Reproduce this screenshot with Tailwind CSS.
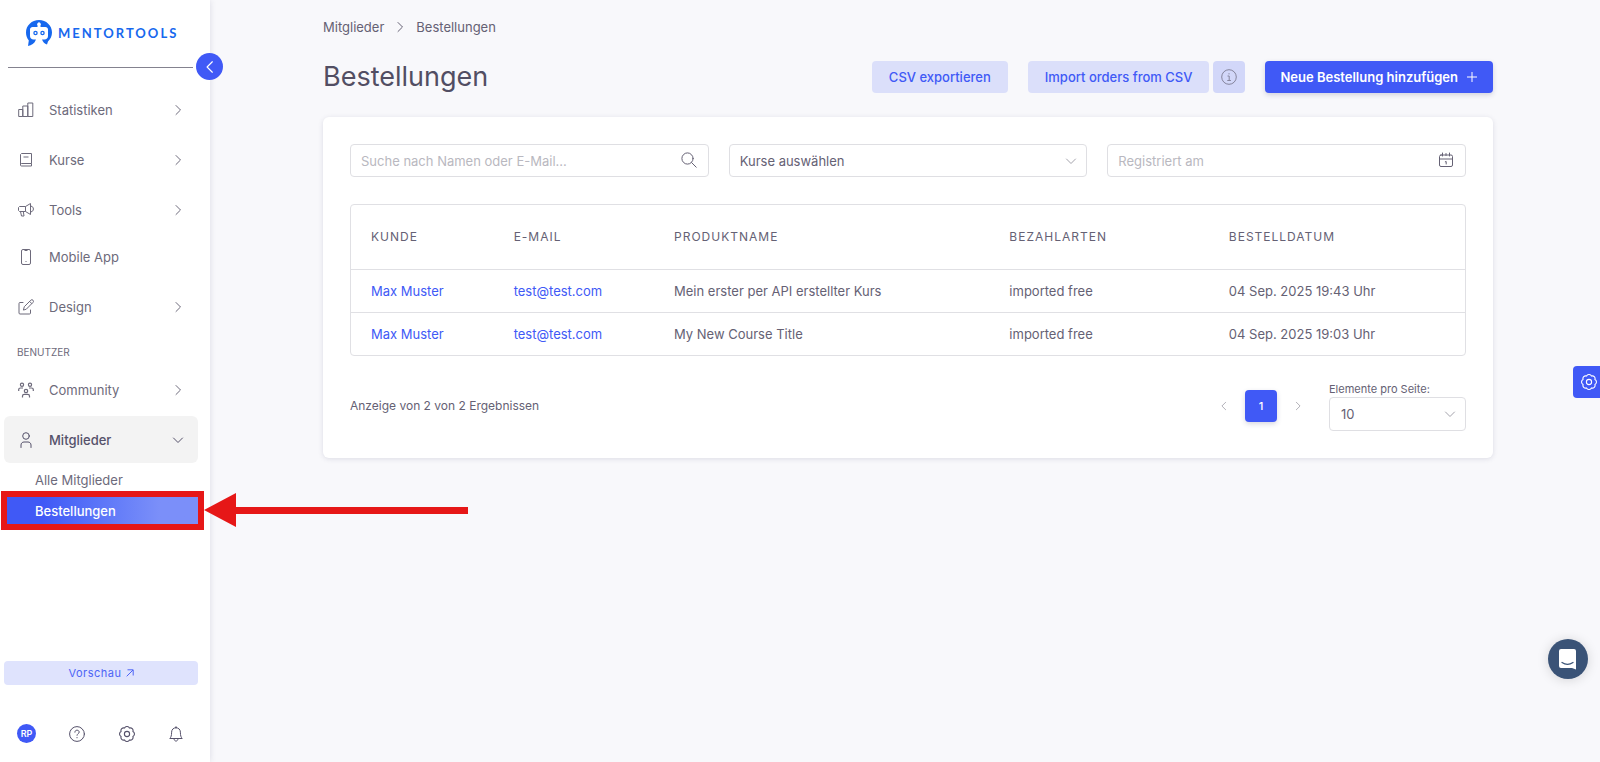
<!DOCTYPE html>
<html lang="de">
<head>
  <meta charset="UTF-8">
  <meta name="viewport" content="width=device-width, initial-scale=1.0">
  <title>Bestellungen</title>
  <script src="https://cdn.jsdelivr.net/npm/@tailwindcss/browser@4"></script>
</head>
<body class="flex min-h-screen bg-[#f8f8fb] font-[Inter,sans-serif] text-[13px] leading-5 text-[#656174]">

  <!-- Icons used more than once -->
  <svg class="hidden">
    <symbol id="chevron" viewBox="0 0 12 12"><path d="M4 1.500 8.500 6 4 10.500" fill="none" stroke="currentColor" stroke-linecap="round" stroke-linejoin="round"/></symbol>
    <symbol id="gear" viewBox="0 0 16 16" fill="none" stroke="currentColor" stroke-width="1.100" stroke-linejoin="round">
      <path d="M13.900 5.550a2.700 2.700 0 0 1 0 4.900 2.700 2.700 0 0 1-3.450 3.450 2.700 2.700 0 0 1-4.900 0 2.700 2.700 0 0 1-3.450-3.450 2.700 2.700 0 0 1 0-4.900 2.700 2.700 0 0 1 3.450-3.450 2.700 2.700 0 0 1 4.900 0 2.700 2.700 0 0 1 3.450 3.450Z"/>
      <circle cx="8" cy="8" r="2.600"/>
    </symbol>
  </svg>

  <!-- Sidebar -->
  <aside class="relative flex w-[210px] shrink-0 flex-col bg-white shadow-[0_0_6px_rgba(60,60,100,0.15)]">
    <a href="#" class="mr-[17px] ml-2 flex h-[68px] items-center gap-[6px] border-b border-[#84828f] pb-[2px] pl-[18px] text-[#1768ee]">
      <svg class="size-[26px] shrink-0" viewBox="0 0 26 26">
        <path fill="currentColor" d="M13 0C5.800 0 0 5.500 0 12.500c0 3 1 5.700 2.800 8L2 26c3.500-.5 6.500-2.500 8-6.500H7.500c-2 0-3.500-1.500-3.500-3.500V9.500C4 8 5.200 7 6.500 7h5V5.500a1.900 1.900 0 1 1 3 0V7h5C20.800 7 22 8 22 9.500V16c0 2-1.500 3.500-3.500 3.500H16c1 2.500 2.500 4.500 5 5l1-3c2.500-2.300 4-5.500 4-9C26 5.500 20.200 0 13 0Z"/>
        <circle cx="9.500" cy="13" r="1.600" fill="none" stroke="currentColor" stroke-width="1.300"/>
        <circle cx="16.500" cy="13" r="1.600" fill="none" stroke="currentColor" stroke-width="1.300"/>
      </svg>
      <span class="font-[Lato,sans-serif] text-[13px] font-bold tracking-[2px]">MENTORTOOLS</span>
    </a>
    <button aria-label="Menü einklappen" class="absolute top-[53px] -right-[13px] flex size-[27px] items-center justify-center rounded-full bg-[#4059f6] text-white">
      <svg class="size-[14px] rotate-180"><use href="#chevron"/></svg>
    </button>

    <nav class="pt-[18px] pr-3 pl-1 text-[#6d6a7b]">
      <ul>
        <li class="mb-[3px]">
          <a href="#" class="flex h-[47px] items-center rounded-md px-[14px]">
            <svg class="mr-[15px] size-4" viewBox="0 0 16 16" fill="none" stroke="currentColor" stroke-linejoin="round"><path d="M.7 7.500h4.100v7H.7zM4.800 4h5v10.500h-5zM9.800 1h5v13.500h-5z"/></svg>
            <span class="flex-1">Statistiken</span>
            <svg class="size-3"><use href="#chevron"/></svg>
          </a>
        </li>
        <li class="mb-[3px]">
          <a href="#" class="flex h-[47px] items-center rounded-md px-[14px]">
            <svg class="mr-[15px] size-4" viewBox="0 0 16 16" fill="none" stroke="currentColor" stroke-linejoin="round"><path d="M13.500 11.500V1.500h-10l-1 1v10.500a1 1 0 0 0 1 1h10v-2.500h-10a1 1 0 0 0-1 1M5.500 5h5"/></svg>
            <span class="flex-1">Kurse</span>
            <svg class="size-3"><use href="#chevron"/></svg>
          </a>
        </li>
        <li>
          <a href="#" class="flex h-[47px] items-center rounded-md px-[14px]">
            <svg class="mr-[15px] size-4" viewBox="0 0 16 16" fill="none" stroke="currentColor" stroke-linejoin="round"><path d="M1.500 4.500h6l5-3v11l-5-3h-6l-1-1v-3zM7.500 4.500v5M2.500 9.500l1 4.500h2.500l-.7-4.500M12.500 4.300h1.500l1.300 1.700v2l-1.300 1.700h-1.500"/></svg>
            <span class="flex-1">Tools</span>
            <svg class="size-3"><use href="#chevron"/></svg>
          </a>
        </li>
        <li class="mb-[3px]">
          <a href="#" class="flex h-[47px] items-center rounded-md px-[14px]">
            <svg class="mr-[15px] size-4" viewBox="0 0 16 16" fill="none" stroke="currentColor"><rect x="3.500" y=".5" width="9" height="15" rx="1.500"/><path d="M6.500 1.500h3M7.500 12.500h1"/></svg>
            <span class="flex-1">Mobile App</span>
          </a>
        </li>
        <li>
          <a href="#" class="flex h-[47px] items-center rounded-md px-[14px]">
            <svg class="mr-[15px] size-4" viewBox="0 0 16 16" fill="none" stroke="currentColor" stroke-linecap="round" stroke-linejoin="round"><path d="M5 3.500H2a1 1 0 0 0-1 1V14a1 1 0 0 0 1 1h9.500a1 1 0 0 0 1-1v-3M5.500 10.700l.8-3 6.500-6.500a1.500 1.500 0 0 1 2.200 2.200L8.500 10zM11.700 2.500l2 2"/></svg>
            <span class="flex-1">Design</span>
            <svg class="size-3"><use href="#chevron"/></svg>
          </a>
        </li>
      </ul>
      <h2 class="flex h-9 items-center px-[13px] pt-2 text-[10px]">BENUTZER</h2>
      <ul>
        <li class="mb-[3px]">
          <a href="#" class="flex h-[47px] items-center rounded-md px-[14px]">
            <svg class="mr-[15px] size-4" viewBox="0 0 16 16" fill="none" stroke="currentColor" stroke-width="1.200"><circle cx="4" cy="2.700" r="1.600"/><circle cx="12" cy="2.700" r="1.600"/><circle cx="8" cy="9" r="1.700"/><path d="M.7 9V7.500c0-1 .8-1.500 1.800-1.500H5M15.300 9V7.500c0-1-.8-1.500-1.800-1.500H11M4.500 15.500V14c0-1 .8-1.700 1.800-1.700h3.400c1 0 1.800.7 1.800 1.700v1.500"/></svg>
            <span class="flex-1">Community</span>
            <svg class="size-3"><use href="#chevron"/></svg>
          </a>
        </li>
        <li>
          <a href="#" class="flex h-[47px] items-center rounded-md bg-[#f3f3f3] px-[14px] font-medium text-[#55516a]">
            <svg class="mr-[15px] size-4" viewBox="0 0 16 16" fill="none" stroke="currentColor" stroke-linecap="round"><circle cx="8" cy="4" r="3.300"/><path d="M3 15.500V13c0-1.700 1.300-3 3-3h4c1.700 0 3 1.300 3 3v2.500"/></svg>
            <span class="flex-1">Mitglieder</span>
            <svg class="size-3 rotate-90"><use href="#chevron"/></svg>
          </a>
          <ul>
            <li><a href="#" class="flex h-[34px] items-center px-[31px]">Alle Mitglieder</a></li>
            <li class="relative">
              <a href="#" class="flex h-[27px] items-center bg-gradient-to-r from-[#4059f6] from-20% to-[#7b8ff9] to-80% px-[31px] font-medium text-white">Bestellungen</a>
              <div class="pointer-events-none absolute -inset-x-[6px] -inset-y-[6px] ml-[3px] border-6 border-[#e61717]"></div>
              <svg class="pointer-events-none absolute -top-1 left-[200px] z-10 h-[34px] w-[264px] text-[#e61717]" viewBox="0 0 264 34" fill="currentColor"><path d="M0 17 32 0v14h232v7H32v13z"/></svg>
            </li>
          </ul>
        </li>
      </ul>
    </nav>

    <div class="mt-auto pr-3 pl-1">
      <button class="flex h-6 w-full items-center justify-center gap-1 rounded bg-[#dfe3fd] text-[11px] tracking-[0.5px] text-[#4d64f6]">
        Vorschau
        <svg class="size-2" viewBox="0 0 8 8" fill="none" stroke="currentColor"><path d="M.7 7.300 7 1M1.500.8h5.700v5.700"/></svg>
      </button>
      <div class="mt-[39px] mb-[19px] flex items-center justify-between pr-[14px] pl-[13px] text-[#55516a]">
        <button class="size-[19px] rounded-full bg-[#4059f6] text-[9px] font-semibold text-white">RP</button>
        <button aria-label="Hilfe">
          <svg class="size-4" viewBox="0 0 16 16" fill="none" stroke="currentColor" stroke-linecap="round"><circle cx="8" cy="8" r="7.400"/><path d="M5.900 6.200C5.900 4.900 6.800 4.200 8 4.200s2.200.8 2.200 1.900C10.200 7.600 8 7.700 8 9.300M8 11.500v.3"/></svg>
        </button>
        <button aria-label="Einstellungen"><svg class="size-4"><use href="#gear"/></svg></button>
        <button aria-label="Benachrichtigungen">
          <svg class="size-4" viewBox="0 0 16 16" fill="none" stroke="currentColor" stroke-linecap="round" stroke-linejoin="round"><path d="M8 .7v1M8 1.700c-2.700 0-4.400 2-4.400 4.500 0 3.500-.6 5-1.800 6.300h12.400c-1.200-1.300-1.800-2.800-1.800-6.300 0-2.500-1.700-4.500-4.400-4.500ZM6 12.700c0 3.300 4 3.300 4 0"/></svg>
        </button>
      </div>
    </div>
  </aside>

  <!-- Content -->
  <main class="min-w-0 flex-1 pl-[6px]">
    <div class="mx-auto max-w-[1170px]">
      <nav aria-label="Breadcrumb" class="flex items-center gap-[10px] pt-[17px]">
        <a href="#">Mitglieder</a>
        <svg class="size-3"><use href="#chevron"/></svg>
        <a href="#">Bestellungen</a>
      </nav>

      <div class="mt-6 flex h-8 items-center">
        <h1 class="mr-auto text-[27px] text-[#524e63]">Bestellungen</h1>
        <button class="h-8 rounded bg-[#dbdffa] px-[17px] font-medium text-[#4059f6]">CSV exportieren</button>
        <button class="ml-5 h-8 rounded bg-[#dbdffa] px-[17px] font-medium text-[#4059f6]">Import orders from CSV</button>
        <button aria-label="Info" class="ml-1 flex size-8 items-center justify-center rounded bg-[#d2d7f9] text-[#85849c]">
          <svg class="size-4" viewBox="0 0 16 16" fill="none" stroke="currentColor"><circle cx="8" cy="8" r="7.300"/><path d="M6.500 7h1.700v4.500M6.300 11.500h3.600M8 4.200v1.200"/></svg>
        </button>
        <button class="ml-5 flex h-8 items-center gap-2 rounded bg-[#4059f6] px-[15px] font-semibold text-white shadow-[0_2px_5px_rgba(60,60,100,0.2)]">
          Neue Bestellung hinzufügen
          <svg class="size-3" viewBox="0 0 12 12" stroke="currentColor"><path d="M6 1v10M1 6h10"/></svg>
        </button>
      </div>

      <section class="mt-6 rounded-md bg-white p-[27px] shadow-[0_1px_5px_rgba(60,60,100,0.15)]">
        <div class="grid grid-cols-3 gap-5">
          <div class="relative">
            <input type="text" aria-label="Suche" placeholder="Suche nach Namen oder E-Mail..." class="h-[33px] w-full rounded border border-[#dfdfe3] px-[10px] placeholder:text-[#b9b8c0]">
            <svg class="absolute top-2 right-3 size-4" viewBox="0 0 16 16" fill="none" stroke="currentColor" stroke-linecap="round"><circle cx="6.500" cy="6.500" r="5.600"/><path d="m10.600 10.600 4.600 4.600"/></svg>
          </div>
          <div class="relative">
            <select aria-label="Kurse" class="h-[33px] w-full appearance-none rounded border border-[#dfdfe3] px-[10px]">
              <option>Kurse auswählen</option>
            </select>
            <svg class="pointer-events-none absolute top-[11px] right-[10px] size-3 rotate-90 text-[#a3a2ab]"><use href="#chevron"/></svg>
          </div>
          <div class="relative">
            <input type="text" aria-label="Registriert am" placeholder="Registriert am" class="h-[33px] w-full rounded border border-[#dfdfe3] px-[10px] placeholder:text-[#b9b8c0]">
            <svg class="absolute top-2 right-3 size-4" viewBox="0 0 16 16" fill="none" stroke="currentColor" stroke-linecap="round"><rect x="1.500" y="3" width="13" height="11.500" rx="1.500"/><path d="M1.500 7h13M4.500 1v3M8 1.500v2M11.500 1v3M7.300 9.800l.9-.3v2.500"/></svg>
          </div>
        </div>

        <div class="mt-[27px] rounded border border-[#e0e0e4]">
          <table class="w-full table-fixed text-left">
            <thead>
              <tr class="h-16 text-[12px] tracking-[1px]">
                <th class="w-[14.600%] pl-5 font-normal">KUNDE</th>
                <th class="w-[14.400%] font-normal">E-MAIL</th>
                <th class="w-[30.100%] font-normal">PRODUKTNAME</th>
                <th class="w-[19.700%] font-normal">BEZAHLARTEN</th>
                <th class="font-normal">BESTELLDATUM</th>
              </tr>
            </thead>
            <tbody>
              <tr class="h-[43px] border-t border-[#e0e0e4]">
                <td class="pl-5"><a href="#" class="text-[#4059f6]">Max Muster</a></td>
                <td><a href="#" class="text-[#4059f6]">test@test.com</a></td>
                <td>Mein erster per API erstellter Kurs</td>
                <td>imported free</td>
                <td>04 Sep. 2025 19:43 Uhr</td>
              </tr>
              <tr class="h-[43px] border-t border-[#e0e0e4]">
                <td class="pl-5"><a href="#" class="text-[#4059f6]">Max Muster</a></td>
                <td><a href="#" class="text-[#4059f6]">test@test.com</a></td>
                <td>My New Course Title</td>
                <td>imported free</td>
                <td>04 Sep. 2025 19:03 Uhr</td>
              </tr>
            </tbody>
          </table>
        </div>

        <div class="mt-[25px] flex items-center">
          <p class="mr-auto text-[12px]">Anzeige von 2 von 2 Ergebnissen</p>
          <div class="mr-[15px] flex items-center">
            <button aria-label="Zurück" class="flex size-8 items-center justify-center text-[#a3a2ab]"><svg class="size-[10px] rotate-180"><use href="#chevron"/></svg></button>
            <button class="mx-[5px] size-8 rounded bg-[#4059f6] text-[11px] font-medium text-white shadow-[0_2px_5px_rgba(60,60,100,0.2)]">1</button>
            <button aria-label="Weiter" class="flex size-8 items-center justify-center text-[#a3a2ab]"><svg class="size-[10px]"><use href="#chevron"/></svg></button>
          </div>
          <div class="w-[137px]">
            <label for="perPage" class="block text-[11px] leading-4">Elemente pro Seite:</label>
            <div class="relative">
              <select id="perPage" class="h-[34px] w-full appearance-none rounded border border-[#dfdfe3] px-[11px]">
                <option>10</option>
              </select>
              <svg class="pointer-events-none absolute top-[11px] right-[10px] size-3 rotate-90 text-[#a3a2ab]"><use href="#chevron"/></svg>
            </div>
          </div>
        </div>
      </section>
    </div>
  </main>

  <!-- Floating buttons -->
  <button aria-label="Seiteneinstellungen" class="fixed top-[48%] right-0 flex h-8 w-[27px] items-center justify-end rounded-l bg-[#4059f6] pr-[3px] text-white">
    <svg class="size-4"><use href="#gear"/></svg>
  </button>
  <button aria-label="Chat" class="fixed right-3 bottom-[83px] flex size-10 items-center justify-center rounded-full bg-[#3a5377] shadow-[0_1px_12px_rgba(0,0,0,0.15)]">
    <svg class="h-[22px] w-5" viewBox="0 0 20 22"><path fill="#fff" d="M3 1h13a2 2 0 0 1 2 2v18.500L14 20H3a2 2 0 0 1-2-2V3a2 2 0 0 1 2-2Z"/><path d="M4 14.500q5.500 3.600 11 0" fill="none" stroke="#3a5377" stroke-width="1.300" stroke-linecap="round"/></svg>
  </button>

</body>
</html>
